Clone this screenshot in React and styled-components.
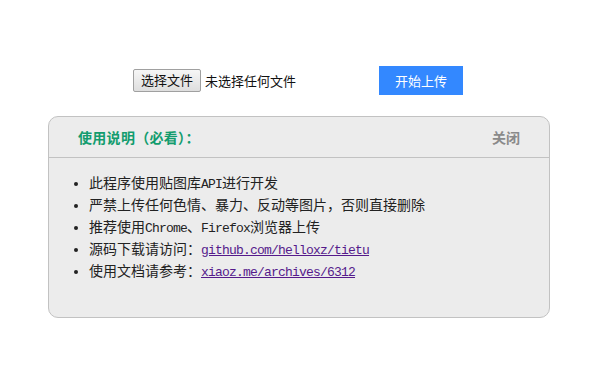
import React from "react";
import styled, { createGlobalStyle } from "styled-components";

const GlobalStyle = createGlobalStyle`
  html, body {
    margin: 0;
    padding: 0;
    background: #fff;
    font-family: "Liberation Sans", "Noto Sans CJK SC", sans-serif;
    font-size: 14px;
    color: #222;
  }
`;

const Page = styled.div`
  display: flex;
  flex-direction: column;
  align-items: center;
  padding-top: 66px;
`;

const UploadBar = styled.div`
  width: 330px;
  margin-right: 5px;
  display: flex;
  justify-content: space-between;
  align-items: center;
`;

const FilePicker = styled.div`
  display: flex;
  align-items: center;
  gap: 4px;
  font-size: 13px;
  color: #111;
`;

const PickButton = styled.button`
  height: 23px;
  padding: 0 7px;
  font-family: inherit;
  font-size: 13px;
  color: #111;
  border: 1px solid #a0a0a0;
  border-radius: 2px;
  background: linear-gradient(#f6f6f6, #dedede);
  line-height: 21px;
`;

const UploadButton = styled.button`
  width: 84px;
  height: 29px;
  border: none;
  background: #3388ff;
  color: #fff;
  font-family: inherit;
  font-size: 13px;
`;

const Panel = styled.div`
  margin-top: 21px;
  margin-right: 3px;
  width: 500px;
  height: 200px;
  border: 1px solid #c2c2c2;
  border-radius: 10px;
  background: #ececec;
  display: flex;
  flex-direction: column;
`;

const PanelHeader = styled.div`
  height: 40px;
  padding: 0 29px;
  display: flex;
  align-items: center;
  justify-content: space-between;
  border-bottom: 1px solid #c2c2c2;
  font-weight: bold;
`;

const Title = styled.span`
  color: #129c6e;
  letter-spacing: 0.3px;
`;

const Close = styled.span`
  color: #8a8a8a;
`;

const NoteList = styled.ul`
  margin: 0;
  padding: 14px 0 0 40px;
  line-height: 22px;
  font-size: 14px;
  color: #222;

  li {
    height: 22px;
  }
`;

const Mono = styled.span`
  font-family: "Liberation Mono", monospace;
  font-size: 13px;
  line-height: 1;
  letter-spacing: -0.8px;
`;

const Link = styled(Mono).attrs({ as: "a" })`
  color: #551a8b;
  text-decoration: underline;
`;

export default function App() {
  return (
    <>
      <GlobalStyle />
      <Page>
        <UploadBar>
          <FilePicker>
            <PickButton>选择文件</PickButton>
            <span>未选择任何文件</span>
          </FilePicker>
          <UploadButton>开始上传</UploadButton>
        </UploadBar>
        <Panel>
          <PanelHeader>
            <Title>使用说明（必看）：</Title>
            <Close>关闭</Close>
          </PanelHeader>
          <NoteList>
            <li>此程序使用贴图库<Mono>API</Mono>进行开发</li>
            <li>严禁上传任何色情、暴力、反动等图片，否则直接删除</li>
            <li>推荐使用<Mono>Chrome</Mono>、<Mono>Firefox</Mono>浏览器上传</li>
            <li>源码下载请访问：<Link href="#">github.com/helloxz/tietu</Link></li>
            <li>使用文档请参考：<Link href="#">xiaoz.me/archives/6312</Link></li>
          </NoteList>
        </Panel>
      </Page>
    </>
  );
}
